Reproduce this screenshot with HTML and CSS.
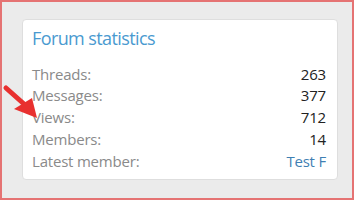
FILE: index.html
```html
<!DOCTYPE html>
<html lang="en">
<head>
    <meta charset="UTF-8">
    <title>Forum statistics</title>
    <link rel="stylesheet" href="styles.css">
</head>
<body>
    <div class="frame">
        <div class="block">
            <h3 class="block-title">Forum statistics</h3>
            <dl class="stats">
                <div class="pair"><dt>Threads:</dt><dd>263</dd></div>
                <div class="pair"><dt>Messages:</dt><dd>377</dd></div>
                <div class="pair"><dt>Views:</dt><dd>712</dd></div>
                <div class="pair"><dt>Members:</dt><dd>14</dd></div>
                <div class="pair"><dt>Latest member:</dt><dd><a href="#">Test F</a></dd></div>
            </dl>
        </div>
        <svg class="arrow" width="44" height="50" viewBox="0 0 44 50">
            <line x1="4" y1="16" x2="22" y2="32" stroke="#e8302f" stroke-width="5" stroke-linecap="round"/>
            <polygon points="12,37 30,26 35,46" fill="#e8302f"/>
        </svg>
    </div>
</body>
</html>
```

FILE: styles.css
```css
body {
    margin: 0;
    font-family: "Open Sans", "Noto Sans", sans-serif;
}
.frame {
    position: relative;
    box-sizing: border-box;
    width: 354px;
    height: 200px;
    border: 2px solid #e57373;
    background-color: #ebebeb;
    padding: 17px 14px 0 20px;
}
.block {
    background-color: #fff;
    border: 1px solid #dedede;
    border-radius: 4px;
    height: 161px;
    box-sizing: border-box;
    padding: 6px 11px 0 9px;
}
.block-title {
    margin: 0 0 13.5px;
    font-size: 18px;
    font-weight: normal;
    letter-spacing: -0.6px;
    color: #4a9ad0;
    line-height: 24px;
}
.stats {
    margin: 0;
}
.pair {
    display: flex;
    justify-content: space-between;
    font-size: 15px;
    line-height: 21.75px;
    letter-spacing: -0.2px;
}
.pair dt {
    color: #8a8a8a;
}
.pair dd {
    margin: 0;
    color: #222;
}
.pair a {
    color: #3f7fb3;
    text-decoration: none;
}
.arrow {
    position: absolute;
    left: 0;
    top: 70px;
}
```
